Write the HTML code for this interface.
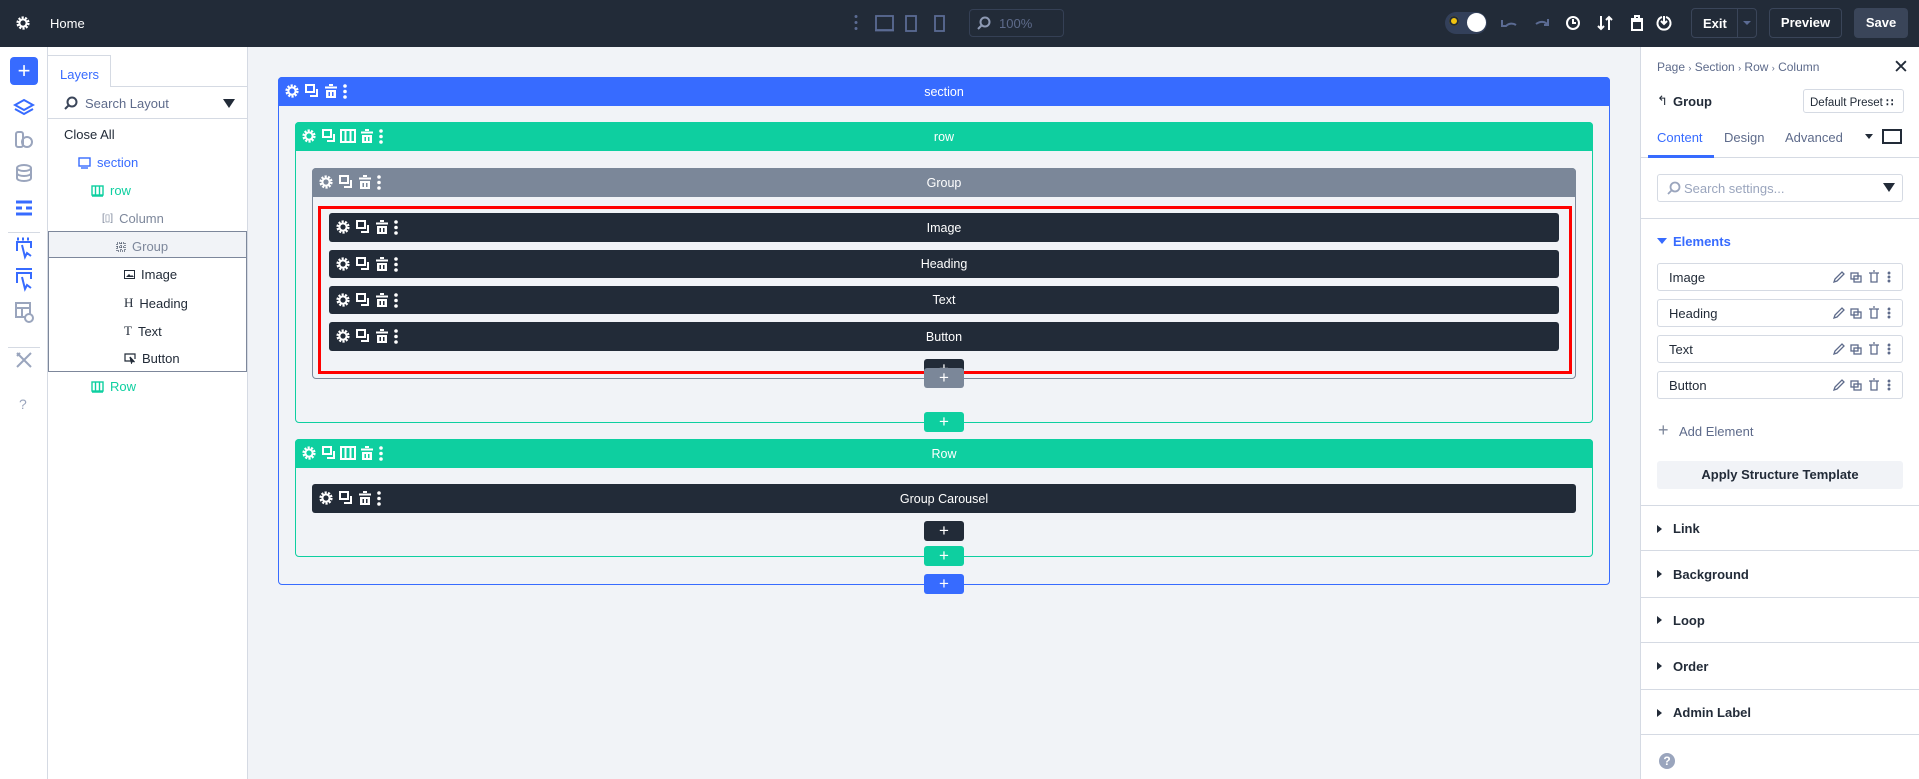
<!DOCTYPE html>
<html><head><meta charset="utf-8">
<style>
*{box-sizing:border-box;margin:0;padding:0}
body{width:1919px;height:779px;overflow:hidden;background:#f1f3f7;font-family:"Liberation Sans",sans-serif;position:relative;font-size:13px;color:#222b38}
.a{position:absolute}
.top{left:0;top:0;width:1919px;height:47px;background:#222b38}
.rail{left:0;top:47px;width:48px;height:732px;background:#fff;border-right:1px solid #d5dae3}
.layers{left:48px;top:47px;width:200px;height:732px;background:#fff;border-right:1px solid #d5dae3}
.rp{left:1640px;top:47px;width:279px;height:732px;background:#fff;border-left:1px solid #d5dae3}
.hdr{height:29px;color:#fff;font-size:12.5px;display:flex;align-items:center;justify-content:center}
.tb{position:absolute;left:6px;top:6px;height:17px}
.bar{position:absolute;background:#222b38;border-radius:3px;color:#fff;font-size:12.5px;display:flex;align-items:center;justify-content:center}
.plus{position:absolute;width:40px;height:20px;border-radius:3px;color:#fff;font-size:17px;line-height:20px;text-align:center;left:924px}
.li{position:absolute;font-size:13px;display:flex;align-items:center;gap:6px}
.el{position:absolute;left:1657px;width:246px;height:28px;border:1px solid #d5dae3;border-radius:3px;font-size:13px;padding-left:11px;display:flex;align-items:center;color:#222b38}
.acc{position:absolute;left:1641px;width:278px;border-top:1px solid #d5dae3;font-weight:bold;font-size:13px;padding-left:32px;display:flex;align-items:center}
.acc:before{content:"";position:absolute;left:16px;border-left:5px solid #222b38;border-top:4px solid transparent;border-bottom:4px solid transparent}
</style></head><body>
<svg width="0" height="0" style="position:absolute">
<defs>
<g id="gear"><circle cx="8" cy="8" r="5.3" fill="none" stroke="#fff" stroke-width="2.6" stroke-dasharray="2.1 1.25"/><circle cx="8" cy="8" r="3.6" fill="none" stroke="#fff" stroke-width="2"/></g>
<g id="dup" fill="none" stroke="#fff" stroke-width="2"><rect x="2" y="2" width="8" height="7"/><path d="M13 6v7H6"/></g>
<g id="trash" fill="#fff"><rect x="6" y="1" width="4" height="2"/><rect x="2" y="3.5" width="12" height="2"/><path d="M3 7h10v8H3z M5.5 9v4h1.5V9z M9 9v4h1.5V9z" fill-rule="evenodd"/></g>
<g id="dots" fill="#fff"><circle cx="3" cy="3" r="1.8"/><circle cx="3" cy="8.5" r="1.8"/><circle cx="3" cy="14" r="1.8"/></g>
<g id="cols" fill="none" stroke="#fff" stroke-width="2"><rect x="1" y="2" width="14" height="12"/><path d="M5.5 2v12M10.5 2v12"/></g>
<g id="tb3"><use href="#gear"/><use href="#dup" x="20"/><use href="#trash" x="39"/><use href="#dots" x="58"/></g>
<g id="tb4"><use href="#gear"/><use href="#dup" x="20"/><use href="#cols" x="39"/><use href="#trash" x="58"/><use href="#dots" x="77"/></g>
</defs></svg>

<!-- top bar -->
<div class="a top">
<svg class="a" style="left:15px;top:15px" width="17" height="17"><use href="#gear"/></svg>
<div class="a" style="left:50px;top:16px;color:#fff;font-size:13px">Home</div>
<svg class="a" style="left:851px;top:14px" width="100" height="20" fill="none" stroke="#5b6b93" stroke-width="1.8">
<circle cx="5" cy="2.5" r="1.5" fill="#5b6b93" stroke="none"/><circle cx="5" cy="8.5" r="1.5" fill="#5b6b93" stroke="none"/><circle cx="5" cy="14.5" r="1.5" fill="#5b6b93" stroke="none"/>
<rect x="25" y="2" width="17" height="14"/><path d="M24 16.5h19"/>
<rect x="55" y="2" width="10" height="15"/><rect x="84" y="2" width="9" height="15"/></svg>
<div class="a" style="left:969px;top:9px;width:95px;height:28px;border:1px solid #354055;border-radius:4px"></div>
<svg class="a" style="left:977px;top:16px" width="14" height="14" fill="none" stroke="#8e9ab4" stroke-width="2"><circle cx="8" cy="6" r="4.5"/><path d="M4.5 9.5L1 13"/></svg>
<div class="a" style="left:999px;top:16px;color:#5e6b8b;font-size:13px">100%</div>
<div class="a" style="left:1445px;top:12px;width:42px;height:22px;border-radius:11px;background:#33405a"></div>
<div class="a" style="left:1449px;top:16px;width:10px;height:10px;border-radius:50%;background:#f1c40f;box-shadow:0 0 0 2px #222b38 inset"></div>
<div class="a" style="left:1467px;top:13px;width:19px;height:19px;border-radius:50%;background:#fff"></div>
<svg class="a" style="left:1500px;top:14px" width="190" height="20" fill="none" stroke-width="2">
<path d="M2 6v6h4c3-3 7-3 10-1" stroke="#5b6b93"/><path d="M48 11c-3-4-8-4-12-1M48 5v6h-4" stroke="#5b6b93"/>
<circle cx="73" cy="9" r="6" stroke="#fff"/><path d="M73 5v4h3" stroke="#fff"/>
<path d="M101 2v13M98 12l3 3 3-3M109 16V3M106 6l3-3 3 3" stroke="#fff"/>
<path d="M131 5h12M135 5V2h4v3M132 7h10v9h-10z" stroke="#fff"/>
<path d="M166 3a6.5 6.5 0 1 1-4 0M164 2v8M161 7l3 3 3-3" stroke="#fff"/></svg>
<div class="a" style="left:1691px;top:8px;width:66px;height:30px;border:1px solid #3a4559;border-radius:4px"></div>
<div class="a" style="left:1737px;top:8px;width:1px;height:30px;background:#3a4559"></div>
<div class="a" style="left:1703px;top:16px;color:#fff;font-weight:bold;font-size:13px">Exit</div>
<div class="a" style="left:1743px;top:21px;border-left:4px solid transparent;border-right:4px solid transparent;border-top:4px solid #5b6b93"></div>
<div class="a" style="left:1769px;top:8px;width:73px;height:30px;border:1px solid #3a4559;border-radius:4px;color:#fff;font-weight:bold;font-size:13px;text-align:center;line-height:28px">Preview</div>
<div class="a" style="left:1854px;top:8px;width:54px;height:30px;background:#3a4559;border-radius:4px;color:#fff;font-weight:bold;font-size:13px;text-align:center;line-height:30px">Save</div>
</div>

<!-- rail -->
<div class="a rail"></div>
<div class="a" style="left:10px;top:57px;width:28px;height:28px;background:#376bff;border-radius:4px;color:#fff;font-size:22px;line-height:27px;text-align:center">+</div>
<svg class="a" style="left:13px;top:98px" width="22" height="320" fill="none" stroke-width="2">
<path d="M11 2l9 5-9 5-9-5z M2 11l9 5 9-5" stroke="#376bff"/>
<g stroke="#9aa5bd"><rect x="3" y="34" width="7" height="15" rx="2"/><circle cx="14" cy="44" r="5"/></g>
<g stroke="#9aa5bd"><ellipse cx="11" cy="70" rx="7" ry="3"/><path d="M4 70v10c0 4 14 4 14 0V70M4 75c0 4 14 4 14 0"/></g>
<g stroke="#376bff" stroke-width="3"><path d="M3 104h16M3 110h6M13 110h6M3 116h16"/></g>
<g stroke="#376bff"><path d="M4 153v-9h14v6M9 147l3 12 2-4 4 3"/><path d="M4 141h2M9 141h2M14 141h2" stroke-width="3"/></g>
<g stroke="#376bff"><path d="M4 185v-10h14v6M9 179l3 12 2-4 4 3M3 171h16"/></g>
<g stroke="#9aa5bd"><rect x="3" y="205" width="14" height="14"/><path d="M3 210h14M9 210v9"/><circle cx="16" cy="220" r="4" fill="#fff"/></g>
<g stroke="#9aa5bd"><path d="M4 255l14 14M18 255L4 269M4 258l3-3"/></g>
</svg>
<div class="a" style="left:8px;top:232px;width:32px;height:1px;background:#d5dae3"></div>
<div class="a" style="left:8px;top:347px;width:32px;height:1px;background:#d5dae3"></div>
<div class="a" style="left:19px;top:396px;color:#9aa5bd;font-size:14px">?</div>

<!-- layers -->
<div class="a layers"></div>
<div class="a" style="left:48px;top:55px;width:63px;height:32px;border:1px solid #d5dae3;border-bottom:none;border-left:none;background:#fff;color:#376bff;font-size:13px;padding:11px 0 0 12px">Layers</div>
<div class="a" style="left:111px;top:86px;width:136px;height:1px;background:#d5dae3"></div>
<svg class="a" style="left:64px;top:96px" width="14" height="14" fill="none" stroke="#3a4559" stroke-width="2"><circle cx="8" cy="6" r="4.5"/><path d="M4.5 9.5L1 13"/></svg>
<div class="a" style="left:85px;top:96px;color:#5e6b8b;font-size:13px">Search Layout</div>
<div class="a" style="left:223px;top:99px;border-left:6px solid transparent;border-right:6px solid transparent;border-top:9px solid #222b38"></div>
<div class="a" style="left:48px;top:118px;width:199px;height:1px;background:#d5dae3"></div>
<div class="li" style="left:64px;top:127px">Close All</div>
<div class="li" style="left:78px;top:155px;color:#376bff"><svg width="13" height="12" fill="none" stroke="#376bff" stroke-width="1.4"><rect x="1" y="1" width="11" height="8"/><path d="M3 11h7"/></svg>section</div>
<div class="li" style="left:91px;top:183px;color:#0ecfa0"><svg width="13" height="12" fill="none" stroke="#0ecfa0" stroke-width="1.4"><rect x="1" y="1" width="11" height="9"/><path d="M4.5 1v9M8.5 1v9M1 11h11"/></svg>row</div>
<div class="li" style="left:102px;top:211px;color:#7d879b"><span style="font-size:10px">[▯]</span>Column</div>
<div class="a" style="left:48px;top:231px;width:199px;height:141px;border:1px solid #7d879b"></div>
<div class="a" style="left:49px;top:232px;width:197px;height:26px;background:#f1f3f7;border-bottom:1px solid #7d879b"></div>
<div class="li" style="left:116px;top:239px;color:#7d879b"><svg width="10" height="10" fill="none" stroke="#3a4559" stroke-width="1.2" stroke-dasharray="1 1"><rect x="1" y="1" width="8" height="8"/><path d="M5 1v8M1 5h8"/></svg>Group</div>
<div class="li" style="left:124px;top:267px"><svg width="11" height="9"><rect x=".5" y=".5" width="10" height="8" fill="none" stroke="#222b38"/><path d="M2 7l3-3 2 2 1-1 2 2z" fill="#222b38"/></svg>Image</div>
<div class="li" style="left:124px;top:295px"><span style="font-family:'Liberation Serif',serif;font-size:13px">H</span>Heading</div>
<div class="li" style="left:124px;top:323px"><span style="font-family:'Liberation Serif',serif;font-size:13px">T</span>Text</div>
<div class="li" style="left:124px;top:351px"><svg width="12" height="11" fill="none" stroke="#222b38" stroke-width="1.2"><path d="M8 8H1V1h10v5"/><path d="M6 4l1.5 6 1-2 2 1z" fill="#222b38"/></svg>Button</div>
<div class="li" style="left:91px;top:379px;color:#0ecfa0"><svg width="13" height="12" fill="none" stroke="#0ecfa0" stroke-width="1.4"><rect x="1" y="1" width="11" height="9"/><path d="M4.5 1v9M8.5 1v9M1 11h11"/></svg>Row</div>

<!-- canvas -->
<div class="a" style="left:278px;top:77px;width:1332px;height:508px;border:1px solid #376bff;border-radius:4px"></div>
<div class="a hdr" style="left:278px;top:77px;width:1332px;background:#376bff;border-radius:4px 4px 0 0">section<svg class="tb" width="80" height="17"><use href="#tb3"/></svg></div>

<div class="a" style="left:295px;top:122px;width:1298px;height:301px;border:1px solid #0ecfa0;border-radius:4px"></div>
<div class="a hdr" style="left:295px;top:122px;width:1298px;background:#0ecfa0;border-radius:4px 4px 0 0">row<svg class="tb" width="90" height="17"><use href="#tb4"/></svg></div>

<div class="a" style="left:312px;top:168px;width:1264px;height:211px;border:1px solid #7b8799;border-radius:4px"></div>
<div class="a hdr" style="left:312px;top:168px;width:1264px;background:#7b8799;border-radius:4px 4px 0 0">Group<svg class="tb" width="80" height="17"><use href="#tb3"/></svg></div>

<div class="a" style="left:318px;top:206px;width:1254px;height:168px;border:3px solid #ff0000"></div>
<div class="bar" style="left:329px;top:213px;width:1230px;height:29px">Image<svg class="tb" width="80" height="17"><use href="#tb3"/></svg></div>
<div class="bar" style="left:329px;top:250px;width:1230px;height:28px">Heading<svg class="tb" width="80" height="17"><use href="#tb3"/></svg></div>
<div class="bar" style="left:329px;top:286px;width:1230px;height:28px">Text<svg class="tb" width="80" height="17"><use href="#tb3"/></svg></div>
<div class="bar" style="left:329px;top:322px;width:1230px;height:29px">Button<svg class="tb" width="80" height="17"><use href="#tb3"/></svg></div>
<div class="plus" style="top:359px;background:#222b38">+</div>
<div class="plus" style="top:368px;background:#7b8799">+</div>
<div class="plus" style="top:412px;background:#0ecfa0">+</div>

<div class="a" style="left:295px;top:439px;width:1298px;height:118px;border:1px solid #0ecfa0;border-radius:4px"></div>
<div class="a hdr" style="left:295px;top:439px;width:1298px;background:#0ecfa0;border-radius:4px 4px 0 0">Row<svg class="tb" width="90" height="17"><use href="#tb4"/></svg></div>
<div class="bar" style="left:312px;top:484px;width:1264px;height:29px">Group Carousel<svg class="tb" width="80" height="17"><use href="#tb3"/></svg></div>
<div class="plus" style="top:521px;background:#222b38">+</div>
<div class="plus" style="top:546px;background:#0ecfa0">+</div>
<div class="plus" style="top:574px;background:#376bff">+</div>

<!-- right panel -->
<div class="a rp"></div>
<div class="a" style="left:1657px;top:60px;color:#5e6b8b;font-size:12px">Page <span style="font-size:9px">›</span> Section <span style="font-size:9px">›</span> Row <span style="font-size:9px">›</span> Column</div>
<div class="a" style="left:1893px;top:56px;font-size:19px;color:#222b38">✕</div>
<div class="a" style="left:1657px;top:93px;font-size:13px">↰</div>
<div class="a" style="left:1673px;top:94px;font-size:13px;font-weight:bold">Group</div>
<div class="a" style="left:1803px;top:89px;width:101px;height:24px;border:1px solid #d5dae3;border-radius:3px;font-size:11.5px;padding:5px 0 0 6px">Default Preset <b>∷</b></div>
<div class="a" style="left:1657px;top:130px;color:#376bff;font-size:13px">Content</div>
<div class="a" style="left:1724px;top:130px;color:#5e6b8b;font-size:13px">Design</div>
<div class="a" style="left:1785px;top:130px;color:#5e6b8b;font-size:13px">Advanced</div>
<div class="a" style="left:1865px;top:134px;border-left:4px solid transparent;border-right:4px solid transparent;border-top:5px solid #222b38"></div>
<div class="a" style="left:1882px;top:129px;width:20px;height:15px;border:2px solid #222b38"></div>
<div class="a" style="left:1641px;top:157px;width:278px;height:1px;background:#d5dae3"></div>
<div class="a" style="left:1648px;top:155px;width:66px;height:3px;background:#376bff"></div>
<div class="a" style="left:1657px;top:174px;width:246px;height:28px;border:1px solid #d5dae3;border-radius:3px"></div>
<svg class="a" style="left:1667px;top:181px" width="14" height="14" fill="none" stroke="#9aa5bd" stroke-width="1.8"><circle cx="8" cy="6" r="4.5"/><path d="M4.5 9.5L1 13"/></svg>
<div class="a" style="left:1684px;top:181px;color:#9aa5bd;font-size:13px">Search settings...</div>
<div class="a" style="left:1883px;top:183px;border-left:6px solid transparent;border-right:6px solid transparent;border-top:9px solid #222b38"></div>
<div class="a" style="left:1641px;top:218px;width:278px;height:1px;background:#d5dae3"></div>
<div class="a" style="left:1657px;top:238px;border-left:5px solid transparent;border-right:5px solid transparent;border-top:6px solid #376bff"></div>
<div class="a" style="left:1673px;top:234px;color:#376bff;font-weight:bold;font-size:13px">Elements</div>
<div class="el" style="top:263px">Image</div>
<div class="el" style="top:299px">Heading</div>
<div class="el" style="top:335px">Text</div>
<div class="el" style="top:371px">Button</div>
<svg class="a" style="left:1832px;top:270px" width="66" height="130" fill="none" stroke="#5e6b8b" stroke-width="1.3">
<g id="ei"><path d="M2 12l1-3 7-7 2 2-7 7z"/><rect x="19" y="3" width="7" height="6"/><rect x="22" y="6" width="7" height="6"/><path d="M37 3h10M39 3v9h6V3M41 1h2"/><circle cx="57" cy="3" r=".8" fill="#5e6b8b"/><circle cx="57" cy="7" r=".8" fill="#5e6b8b"/><circle cx="57" cy="11" r=".8" fill="#5e6b8b"/></g>
<use href="#ei" y="36"/><use href="#ei" y="72"/><use href="#ei" y="108"/></svg>
<div class="a" style="left:1658px;top:420px;color:#7d879b;font-size:18px">+</div>
<div class="a" style="left:1679px;top:424px;color:#5e6b8b;font-size:13px">Add Element</div>
<div class="a" style="left:1657px;top:461px;width:246px;height:28px;background:#f1f3f7;border-radius:3px;font-weight:bold;font-size:13px;text-align:center;line-height:28px">Apply Structure Template</div>
<div class="acc" style="top:505px;height:46px">Link</div>
<div class="acc" style="top:550px;height:47px">Background</div>
<div class="acc" style="top:597px;height:45px">Loop</div>
<div class="acc" style="top:642px;height:47px">Order</div>
<div class="acc" style="top:689px;height:46px">Admin Label</div>
<div class="a" style="left:1641px;top:734px;width:278px;height:1px;background:#d5dae3"></div>
<div class="a" style="left:1659px;top:753px;width:16px;height:16px;border-radius:50%;background:#9aa5bd;color:#fff;font-size:12px;font-weight:bold;text-align:center;line-height:16px">?</div>
</body></html>
